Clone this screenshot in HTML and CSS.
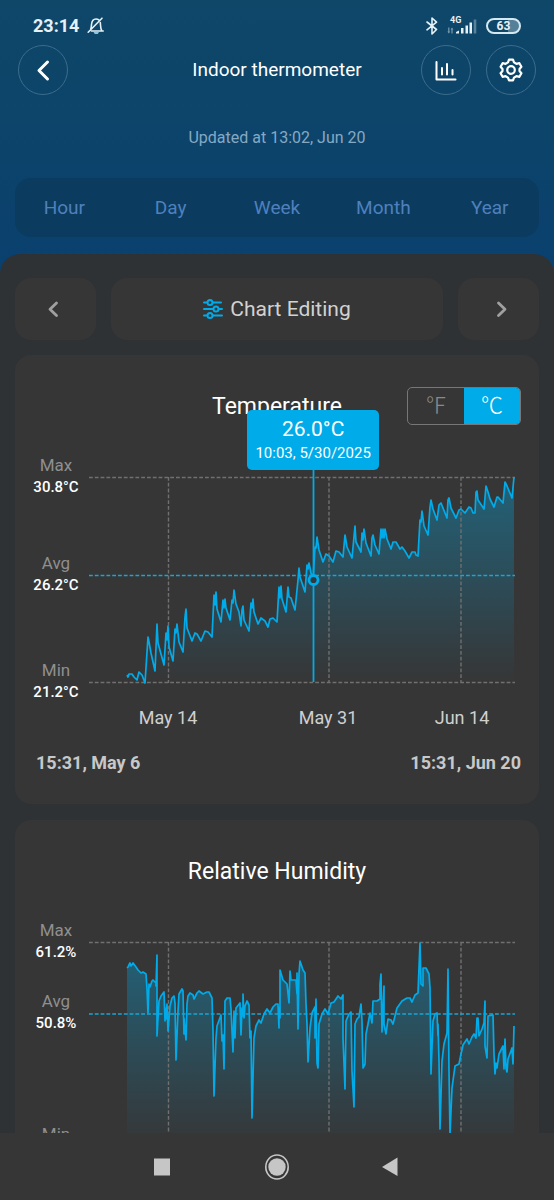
FILE: index.html
```html
<!DOCTYPE html>
<html lang="en">
<head>
    <meta charset="UTF-8">
    <meta name="viewport" content="width=device-width, initial-scale=1.0">
    <title>Indoor thermometer</title>
    <link rel="stylesheet" href="styles.css">
</head>
<body>

    <header class="top">
        <div class="status">
            <span class="time">23:14</span>
            <svg class="bell" width="18" height="18" viewBox="0 0 18 18" fill="none" stroke="currentColor" stroke-width="1.6" stroke-linecap="round">
                <path d="M4.5 14H16.2M3.8 11.5C4.5 10 4.3 9 4.5 7.5C4.8 4.3 6.2 2 9 2C10 2 11 2.2 11.8 2.8M13.3 5.5C13.7 9 13.4 11.5 14.7 13.6M1.2 15.2L15 1.2"/>
                <path d="M6.5 15H12L10.8 17H7.7Z" fill="#8fc3dc" stroke="none"/>
            </svg>
            <div class="status-right">
                <svg width="12" height="18" viewBox="0 0 12 18" fill="none" stroke="currentColor" stroke-width="1.6" stroke-linejoin="round" stroke-linecap="round">
                    <path d="M1 5L10.5 12.5L6 17V1L10.5 5.2L1 12.8"/>
                </svg>
                <div class="signal">
                    <span class="net">4G</span>
                    <svg width="30" height="16" viewBox="0 0 30 16" fill="currentColor">
                        <path d="M1.2 9.5h1.2V13.5H3.3L1.8 15.5L0.3 13.5H1.2ZM4.4 15.5V11.5H3.5L5 9.5L6.4 11.5H5.6V15.5Z" opacity="0.5"/>
                        <path d="M9 14L12 12.5V15.5H9ZM14 10H16.5V15.5H14ZM18.5 7.5H21V15.5H18.5ZM22.5 4.5H25V15.5H22.5Z"/>
                        <path d="M26.7 1.5H29.3V15.5H26.7Z" opacity="0.35"/>
                    </svg>
                </div>
                <span class="battery">63</span>
            </div>
        </div>

        <div class="bar">
            <button class="round" aria-label="Back">
                <svg width="24" height="24" viewBox="0 0 24 24" fill="none" stroke="currentColor" stroke-width="3" stroke-linecap="round" stroke-linejoin="round"><path d="M16.5 4L8 12.5L16.5 21"/></svg>
            </button>
            <h1>Indoor thermometer</h1>
            <div class="bar-right">
                <button class="round" aria-label="Statistics">
                    <svg width="24" height="24" viewBox="0 0 24 24" fill="none" stroke="currentColor" stroke-width="2" stroke-linecap="round" stroke-linejoin="round"><path d="M2.5 4V21.5H21.5M8 10V16.5M13 6V16.5M18.5 12V16.5"/></svg>
                </button>
                <button class="round" aria-label="Settings">
                    <svg width="26" height="26" viewBox="0 0 26 26" fill="none" stroke="currentColor" stroke-width="2.2" stroke-linejoin="round">
                        <path d="M11 2.6H15L16 5.4L18.4 6.8L21.4 6.2L23.4 9.7L21.5 12V14L23.4 16.3L21.4 19.8L18.4 19.2L16 20.6L15 23.4H11L10 20.6L7.6 19.2L4.6 19.8L2.6 16.3L4.5 14V12L2.6 9.7L4.6 6.2L7.6 6.8L10 5.4Z"/>
                        <circle cx="13" cy="13" r="3.8"/>
                    </svg>
                </button>
            </div>
        </div>

        <p class="updated">Updated at 13:02, Jun 20</p>

        <nav class="tabs">
            <button>Hour</button>
            <button>Day</button>
            <button>Week</button>
            <button>Month</button>
            <button>Year</button>
        </nav>
    </header>

    <main class="sheet">
        <div class="tools">
            <button aria-label="Previous">
                <svg width="16" height="18" viewBox="0 0 16 18" fill="none" stroke="currentColor" stroke-width="2.8" stroke-linecap="round" stroke-linejoin="round"><path d="M8.5 3L2 9.3L8.5 15.5"/></svg>
            </button>
            <button class="edit">
                <svg width="20" height="20" viewBox="0 0 20 20" fill="none" stroke="#00abe9" stroke-width="2" stroke-linecap="round">
                    <path d="M1 3.5H4M10 3.5H18M1 10H10M16 10H19M1 16.5H4M10 16.5H19"/>
                    <circle cx="7" cy="3.5" r="2.5"/><circle cx="13" cy="10" r="2.5"/><circle cx="7" cy="16.5" r="2.5"/>
                </svg>
                Chart Editing
            </button>
            <button aria-label="Next">
                <svg width="16" height="18" viewBox="0 0 16 18" fill="none" stroke="currentColor" stroke-width="2.8" stroke-linecap="round" stroke-linejoin="round"><path d="M7.5 3L14 9.3L7.5 15.5"/></svg>
            </button>
        </div>

        <section class="card temp">
            <div class="card-head">
                <h2>Temperature</h2>
                <div class="units">
                    <button aria-label="Fahrenheit">℉</button>
                    <button class="on" aria-label="Celsius">℃</button>
                </div>
            </div>
            <div class="chart">
                <div class="labels">
                    <div>Max<b>30.8°C</b></div>
                    <div class="avg">Avg<b>26.2°C</b></div>
                    <div>Min<b>21.2°C</b></div>
                </div>
                <div class="plot">
                    <svg viewBox="0 0 428 208" preserveAspectRatio="none">
                        <defs>
                            <linearGradient id="fade" gradientUnits="userSpaceOnUse" x1="0" y1="0" x2="0" y2="207">
                                <stop offset="0" stop-color="#00abe9" stop-opacity="0.38"/>
                                <stop offset="1" stop-color="#00abe9" stop-opacity="0"/>
                            </linearGradient>
                        </defs>
                        <polygon class="area"/>
                        <path class="grid" d="M1 1.5H427M1 206.5H427M80.5 1V207M241 1V207M373 1V207"/>
                        <path class="grid mean" d="M1 99.5H427"/>
                        <polyline class="line" points="39,199 40,201 41,198 44,198 46,201 49,204 51,196 54,199 57,207 60,161 61,166 63,177 67,195 69,148 70,167 76,189 78,157 79,164 80,150 81,171 85,185 87,153 88,157 89,148 91,166 95,176 97,141 98,133 99,152 104,165 107,157 109,158 113,165 117,155 120,156 124,161 126,119 127,129 128,116 129,133 133,146 135,124 136,132 137,123 138,132 142,144 144,124 145,127 146,114 148,128 151,136 153,150 154,134 155,130 156,144 161,155 163,127 164,132 165,123 166,136 170,148 173,142 177,145 180,151 182,143 185,142 189,146 191,111 192,122 193,110 194,123 198,136 200,111 201,121 203,122 207,134 210,104 211,92 212,101 217,116 219,89 220,93 221,87 223,97 225,104 227,71 228,72 229,61 231,74 235,86 238,78 241,80 245,86 248,75 251,76 255,81 257,59 259,71 264,82 267,50 268,66 273,76 274,57 275,64 276,53 278,67 283,80 284,62 285,59 287,69 291,78 293,53 294,62 295,53 296,62 297,53 299,63 303,73 305,66 308,66 312,73 314,71 317,75 321,82 324,76 327,76 328,79 330,80 332,44 333,46 334,35 336,50 340,59 342,31 343,24 345,33 349,44 351,29 353,27 359,42 360,24 361,22 363,32 368,42 371,34 373,33 377,37 381,31 383,32 385,37 387,37 388,16 389,15 390,24 396,33 398,10 400,16 402,23 406,31 409,21 410,21 415,27 417,6 419,10 424,22 426,1"/>
                        <path class="cursor" d="M225.5 -8V206"/>
                        <circle class="dot" cx="225.5" cy="104" r="4.5"/>
                    </svg>
                    <div class="tooltip">
                        <strong>26.0°C</strong>
                        <span>10:03, 5/30/2025</span>
                    </div>
                    <div class="dates">
                        <span>May 14</span>
                        <span>May 31</span>
                        <span>Jun 14</span>
                    </div>
                </div>
            </div>
            <div class="range">
                <span>15:31, May 6</span>
                <span>15:31, Jun 20</span>
            </div>
        </section>

        <section class="card humidity">
            <div class="card-head">
                <h2>Relative Humidity</h2>
            </div>
            <div class="chart">
                <div class="labels">
                    <div>Max<b>61.2%</b></div>
                    <div class="avg">Avg<b>50.8%</b></div>
                    <div>Min</div>
                </div>
                <div class="plot">
                    <svg viewBox="0 0 428 208" preserveAspectRatio="none">
                        <polygon class="area"/>
                        <path class="grid" d="M1 1.5H427M1 206.5H427M80.5 1V207M241 1V207M373 1V207"/>
                        <path class="grid mean" d="M1 73H427"/>
                        <polyline class="line" points="39,27 40,26 42,22 43,25 45,22 48,26 50,29 53,32 55,31 58,33 59,48 60,72 61,43 62,46 64,40 65,39 68,42 68,45 69,14 69,95 71,60 73,55 76,51 77,80 78,67 78,78 79,63 80,90 82,65 84,57 86,55 87,62 88,119 90,70 91,53 94,48 95,50 96,93 96,77 98,99 99,63 100,55 102,52 105,54 106,58 109,52 111,50 115,53 119,51 121,51 124,57 125,90 126,155 128,97 129,85 133,74 134,100 135,94 136,128 137,60 139,57 142,57 143,68 145,111 146,70 147,97 148,67 152,62 153,94 154,67 155,75 155,53 156,77 157,65 159,60 161,64 162,97 163,90 164,177 166,97 168,85 171,79 173,82 176,73 179,68 182,72 185,66 188,63 190,63 191,87 191,67 192,77 192,29 195,39 199,43 201,62 202,30 203,39 208,39 209,53 209,32 210,88 211,33 212,20 215,29 217,32 218,63 219,83 220,121 222,87 224,72 227,66 227,97 228,58 229,122 230,127 231,83 234,73 237,68 240,73 243,62 246,61 250,55 253,58 255,54 255,97 257,148 258,80 261,73 263,71 264,130 266,166 267,83 269,78 271,76 273,63 274,80 275,127 277,123 278,93 280,83 282,72 284,82 285,60 289,60 292,58 292,43 293,33 294,91 296,45 296,83 298,93 300,78 303,79 305,83 309,67 314,60 319,57 322,57 324,61 327,54 330,52 332,2 333,43 335,45 335,27 338,27 341,33 342,47 343,133 345,80 347,73 349,72 350,95 350,83 351,120 352,188 354,120 356,103 359,92 360,28 361,130 362,193 364,147 367,125 369,124 371,123 373,113 375,104 379,98 381,103 384,96 386,93 388,97 389,77 390,77 391,95 394,88 396,82 397,60 397,105 399,117 400,75 405,74 406,113 407,133 408,122 409,127 411,113 415,105 416,128 417,98 418,127 419,131 420,118 424,107 425,123 426,85"/>
                    </svg>
                </div>
            </div>
        </section>
    </main>

    <footer class="system">
        <button aria-label="Recent apps">
            <svg width="24" height="28" viewBox="0 0 24 28" fill="currentColor"><rect x="3" y="5.5" width="16" height="17"/></svg>
        </button>
        <button aria-label="Home">
            <svg width="24" height="28" viewBox="0 0 24 28"><ellipse cx="12" cy="14" rx="11.2" ry="12" fill="none" stroke="currentColor" stroke-width="1.6"/><circle cx="12" cy="14" r="8.7" fill="currentColor"/></svg>
        </button>
        <button aria-label="Back">
            <svg width="24" height="28" viewBox="0 0 24 28" fill="currentColor"><path d="M3 14L18.5 4.5V23Z"/></svg>
        </button>
    </footer>

    <script>
        // Fill the area between each line and the bottom of its chart
        document.querySelectorAll('.plot svg').forEach((svg) => {
            const points = svg.querySelector('.line').getAttribute('points');
            svg.querySelector('.area').setAttribute('points', `39,207 ${points} 426,207`);
        });
    </script>
</body>
</html>
```
FILE: styles.css
```css
* {
    margin: 0;
    padding: 0;
    box-sizing: border-box;
}

body {
    height: 100vh;
    display: flex;
    flex-direction: column;
    overflow: hidden;
    font-family: Roboto, sans-serif;
    color: white;
    background: linear-gradient(#0e4768, #0a406e 280px);
}

button {
    border: none;
    background: none;
    color: inherit;
    font: inherit;
    cursor: pointer;
    display: flex;
    align-items: center;
    justify-content: center;
}

svg {
    display: block;
}

/* Status bar */
.status {
    display: flex;
    align-items: center;
    height: 45px;
    padding: 6px 33px 0 33px;
    color: #e6f1f6;
}

.time {
    font-size: 18px;
    font-weight: 700;
}

.bell {
    margin-left: 8px;
}

.status-right {
    margin-left: auto;
    display: flex;
    align-items: center;
    gap: 9px;
}

.signal {
    position: relative;
}

.net {
    position: absolute;
    left: 3px;
    top: -2px;
    font-size: 9px;
    line-height: 9px;
    font-weight: 700;
}

.battery {
    width: 35px;
    height: 16px;
    border: 2px solid #d5e8f0;
    border-radius: 8px;
    font-size: 12px;
    line-height: 12px;
    font-weight: 700;
    text-align: center;
    background: linear-gradient(90deg, transparent 65%, #55809a 65%);
}

/* Header */
.bar {
    display: grid;
    grid-template-columns: 1fr auto 1fr;
    align-items: center;
    padding: 0 18px;
}

.bar h1 {
    font-size: 19px;
    line-height: 24px;
    font-weight: 400;
}

.bar-right {
    display: flex;
    justify-content: flex-end;
    gap: 15px;
}

.round {
    width: 50px;
    height: 50px;
    border: 1px solid #3c6c8b;
    border-radius: 50%;
}

.updated {
    margin-top: 31px;
    font-size: 16px;
    line-height: 24px;
    text-align: center;
    color: #86a9c3;
}

.tabs {
    display: grid;
    grid-template-columns: repeat(5, 20.3%);
    justify-content: center;
    height: 59px;
    margin: 28px 15px 17px;
    border-radius: 16px;
    background: #0b3c60;
    color: #4f80bd;
    font-size: 19px;
}

/* Main sheet */
.sheet {
    flex: 1;
    min-height: 0;
    overflow: hidden;
    padding: 24px 15px 0;
    border-radius: 20px 20px 0 0;
    background: #2f3234;
}

.tools {
    display: grid;
    grid-template-columns: 81px 1fr 81px;
    gap: 15px;
    height: 62px;
    margin-bottom: 15px;
}

.tools button {
    border-radius: 16px;
    background: #363636;
    color: #a0a0a0;
}

.tools .edit {
    gap: 7px;
    font-size: 21px;
    color: #d2d2d2;
}

.card {
    margin-bottom: 16px;
    padding: 32px 0 29px;
    border-radius: 16px;
    background: #363636;
}

.card-head {
    position: relative;
    display: flex;
    align-items: center;
    justify-content: center;
    height: 38px;
    margin-bottom: 51px;
}

.card-head h2 {
    font-size: 23px;
    font-weight: 400;
}

.units {
    position: absolute;
    right: 18px;
    top: 0;
    display: flex;
    width: 114px;
    height: 38px;
    border: 1px solid #777;
    border-radius: 5px;
    overflow: hidden;
    font-family: "Noto Sans CJK SC", sans-serif;
    font-size: 22px;
    font-weight: 300;
    line-height: 28px;
    color: #8a8a8a;
}

.units button {
    flex: 1;
    padding-bottom: 7px;
}

.units .on {
    background: #00abe9;
    color: white;
}

/* Charts */
.chart {
    display: grid;
    grid-template-columns: 64px 1fr;
    padding: 0 23px 0 9px;
}

.labels {
    margin-top: -22px;
    text-align: center;
    font-size: 17px;
    line-height: 22px;
    color: #8f8f8f;
}

.labels b {
    display: block;
    font-size: 15px;
    font-weight: 500;
    color: white;
}

.temp .avg {
    margin: 54px 0 63px;
}

.humidity .avg {
    margin: 27px 0 89px;
}

.plot {
    position: relative;
}

.plot svg {
    width: 100%;
    height: 208px;
    overflow: visible;
}

.area {
    fill: url(#fade);
}

.grid {
    fill: none;
    stroke: #707070;
    stroke-width: 1.4;
    stroke-dasharray: 3.8 2;
}

.mean {
    stroke: #1aa5d4;
}

.line {
    fill: none;
    stroke: #00abe9;
    stroke-width: 1.7;
    stroke-linejoin: round;
}

.cursor {
    stroke: #00abe9;
    stroke-width: 1.8;
}

.dot {
    fill: #2d3a40;
    stroke: #00abe9;
    stroke-width: 2.8;
}

.tooltip {
    position: absolute;
    top: -66px;
    left: 52.6%;
    transform: translateX(-50%);
    display: flex;
    flex-direction: column;
    align-items: center;
    width: 132px;
    height: 60px;
    padding-top: 7px;
    border-radius: 5px;
    background: #00abe9;
}

.tooltip strong {
    font-size: 21px;
    line-height: 24px;
    font-weight: 400;
}

.tooltip span {
    font-size: 15px;
    line-height: 24px;
    white-space: nowrap;
}

.dates {
    display: grid;
    grid-template-columns: 160fr 160fr 108fr;
    margin-top: 22px;
    text-align: center;
    font-size: 18px;
    line-height: 24px;
    color: #d0d0d0;
}

.range {
    display: flex;
    justify-content: space-between;
    margin-top: 21px;
    padding: 0 18px 0 21px;
    font-size: 18px;
    line-height: 24px;
    font-weight: 700;
    color: #c8c8c8;
}

/* System navigation */
.system {
    display: flex;
    justify-content: center;
    align-items: center;
    gap: 90px;
    height: 67px;
    background: #363636;
    color: #c6c6c6;
}
```
